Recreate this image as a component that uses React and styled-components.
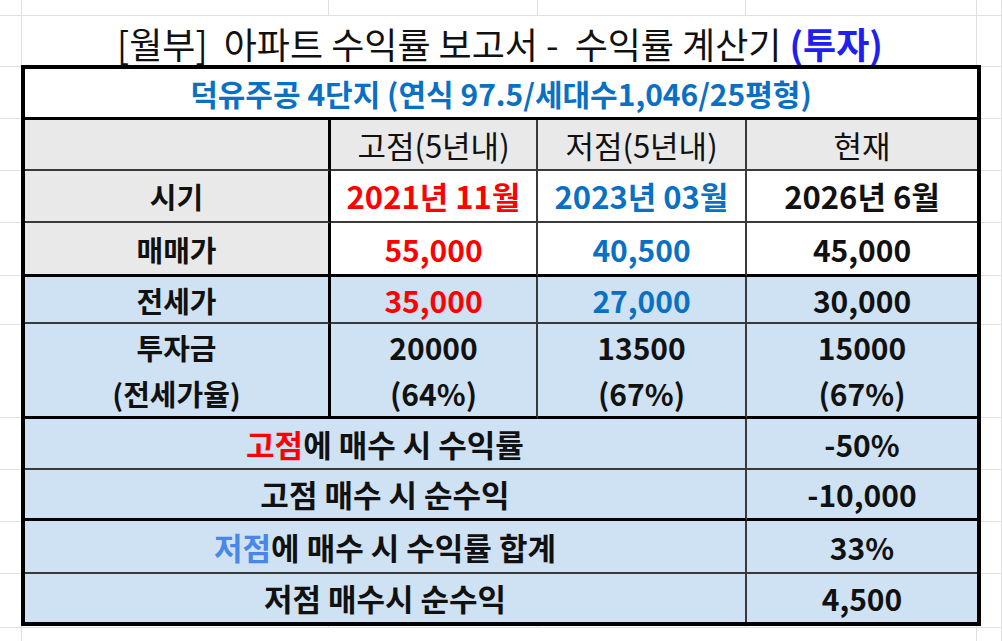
import styled, { createGlobalStyle } from "styled-components";

const GlobalStyle = createGlobalStyle`
  html, body {
    margin: 0;
    padding: 0;
    background: #fff;
  }
  body {
    font-family: "Noto Sans CJK KR", "Noto Sans", sans-serif;
    color: #111;
  }
`;

// spreadsheet gridline sizes (px)
const COLS = [22, 307, 209, 208, 231, 25];
const ROWS = [16, 51, 52, 52, 52, 53, 49, 93, 52, 52, 52, 54, 14];
const MERGED_ROWS = [1, 12];

const RED = "#ff0000";
const BLUE = "#0a70c4";
const GRAY = "#e9e9e9";
const SKY = "#cfe2f3";

const App = () => {
  return (
    <>
      <GlobalStyle />
      <Sheet>
        <GridLayer>
          {ROWS.map((h, r) =>
            MERGED_ROWS.includes(r) ? (
              [
                <GridCell key={`${r}-a`} />,
                <GridCell key={`${r}-b`} $span={4} />,
                <GridCell key={`${r}-c`} />,
              ]
            ) : (
              COLS.map((w, c) => <GridCell key={`${r}-${c}`} />)
            )
          )}
        </GridLayer>

        <Content>
          <Title>
            {"[월부]  아파트 수익률 보고서 -  수익률 계산기 "}
            <TitleAccent>(투자)</TitleAccent>
          </Title>

          <Table>
            {/* 단지 정보 */}
            <Cell $span={4} $b="thick" $size={30} $color={BLUE}>
              덕유주공 4단지 (연식 97.5/세대수1,046/25평형)
            </Cell>

            {/* 헤더 */}
            <Cell $bg={GRAY} $r="thick" $b="thin" />
            <Cell $bg={GRAY} $r="thin" $b="thin" $w={400} $size={31}>
              고점(5년내)
            </Cell>
            <Cell $bg={GRAY} $r="thin" $b="thin" $w={400} $size={31}>
              저점(5년내)
            </Cell>
            <Cell $bg={GRAY} $b="thin" $w={400} $size={31}>
              현재
            </Cell>

            {/* 시기 */}
            <Cell $bg={GRAY} $r="thick" $b="thin">
              시기
            </Cell>
            <Cell $r="thin" $b="thin" $color={RED} $size={31}>
              2021년 11월
            </Cell>
            <Cell $r="thin" $b="thin" $color={BLUE} $size={31}>
              2023년 03월
            </Cell>
            <Cell $b="thin" $size={31}>
              2026년 6월
            </Cell>

            {/* 매매가 */}
            <Cell $bg={GRAY} $r="thick" $b="thick">
              매매가
            </Cell>
            <Num $r="thin" $b="thick" $color={RED}>
              55,000
            </Num>
            <Num $r="thin" $b="thick" $color={BLUE}>
              40,500
            </Num>
            <Num $b="thick">45,000</Num>

            {/* 전세가 */}
            <Cell $bg={SKY} $r="thick" $b="thin">
              전세가
            </Cell>
            <Num $bg={SKY} $r="thin" $b="thin" $color={RED}>
              35,000
            </Num>
            <Num $bg={SKY} $r="thin" $b="thin" $color={BLUE}>
              27,000
            </Num>
            <Num $bg={SKY} $b="thin">
              30,000
            </Num>

            {/* 투자금 */}
            <Cell $bg={SKY} $r="thick" $b="thick">
              <Line>투자금</Line>
              <Line>(전세가율)</Line>
            </Cell>
            <Num $bg={SKY} $r="thin" $b="thick">
              <Line>20000</Line>
              <Line>(64%)</Line>
            </Num>
            <Num $bg={SKY} $r="thin" $b="thick">
              <Line>13500</Line>
              <Line>(67%)</Line>
            </Num>
            <Num $bg={SKY} $b="thick">
              <Line>15000</Line>
              <Line>(67%)</Line>
            </Num>

            {/* 요약 */}
            <Cell $bg={SKY} $span={3} $r="thin" $b="thin" $size={31}>
              <span>
                <Mark $color={RED}>고점</Mark>에 매수 시 수익률
              </span>
            </Cell>
            <Num $bg={SKY} $b="thin">
              -50%
            </Num>

            <Cell $bg={SKY} $span={3} $r="thin" $b="thick" $size={31}>
              고점 매수 시 순수익
            </Cell>
            <Num $bg={SKY} $b="thick">
              -10,000
            </Num>

            <Cell $bg={SKY} $span={3} $r="thin" $b="thin" $size={31}>
              <span>
                <Mark $color="#4a86e8">저점</Mark>에 매수 시 수익률 합계
              </span>
            </Cell>
            <Num $bg={SKY} $b="thin">
              33%
            </Num>

            <Cell $bg={SKY} $span={3} $r="thin" $size={31}>
              저점 매수시 순수익
            </Cell>
            <Num $bg={SKY}>4,500</Num>
          </Table>
        </Content>
      </Sheet>
    </>
  );
};

const borderOf = (kind) => {
  if (kind === "thick") return "3px solid #000";
  if (kind === "thin") return "2px solid #3a3a3a";
  return "none";
};

const Sheet = styled.div`
  display: grid;
  width: 1002px;
  height: 641px;
  overflow: hidden;
`;

const GridLayer = styled.div`
  grid-area: 1 / 1;
  display: grid;
  grid-template-columns: ${COLS.map((c) => `${c}px`).join(" ")};
  grid-template-rows: ${ROWS.map((r) => `${r}px`).join(" ")};
`;

const GridCell = styled.div`
  grid-column: span ${(p) => p.$span || 1};
  box-sizing: border-box;
  border-right: 1px solid #e0e0e0;
  border-bottom: 1px solid #e0e0e0;
`;

const Content = styled.div`
  grid-area: 1 / 1;
  z-index: 1;
  display: flex;
  flex-direction: column;
  padding: 15px 0 0 21px;
`;

const Title = styled.div`
  width: 958px;
  height: 50px;
  display: flex;
  align-items: flex-end;
  justify-content: center;
  font-size: 36px;
  line-height: 1;
  padding-bottom: 4px;
  box-sizing: border-box;
  white-space: pre;
  color: #111;
`;

const TitleAccent = styled.span`
  color: #2020ee;
  font-weight: 700;
`;

const Table = styled.div`
  display: grid;
  grid-template-columns: 306px 207px 209px 230px;
  grid-template-rows: 51px 51px 52px 54px 47px 95px 51px 51px 53px 48px;
  width: 960px;
  box-sizing: border-box;
  border: 4px solid #000;
`;

const Cell = styled.div`
  grid-column: span ${(p) => p.$span || 1};
  box-sizing: border-box;
  display: flex;
  flex-direction: column;
  align-items: center;
  justify-content: center;
  background: ${(p) => p.$bg || "#fff"};
  border-right: ${(p) => borderOf(p.$r)};
  border-bottom: ${(p) => borderOf(p.$b)};
  font-size: ${(p) => p.$size || 29}px;
  font-weight: ${(p) => p.$w || 700};
  color: ${(p) => p.$color || "#111"};
  line-height: 46px;
  white-space: nowrap;
`;

const Num = styled(Cell)`
  font-size: 30px;
`;

const Line = styled.div`
  height: 46px;
`;

const Mark = styled.span`
  color: ${(p) => p.$color};
`;

export default App;
